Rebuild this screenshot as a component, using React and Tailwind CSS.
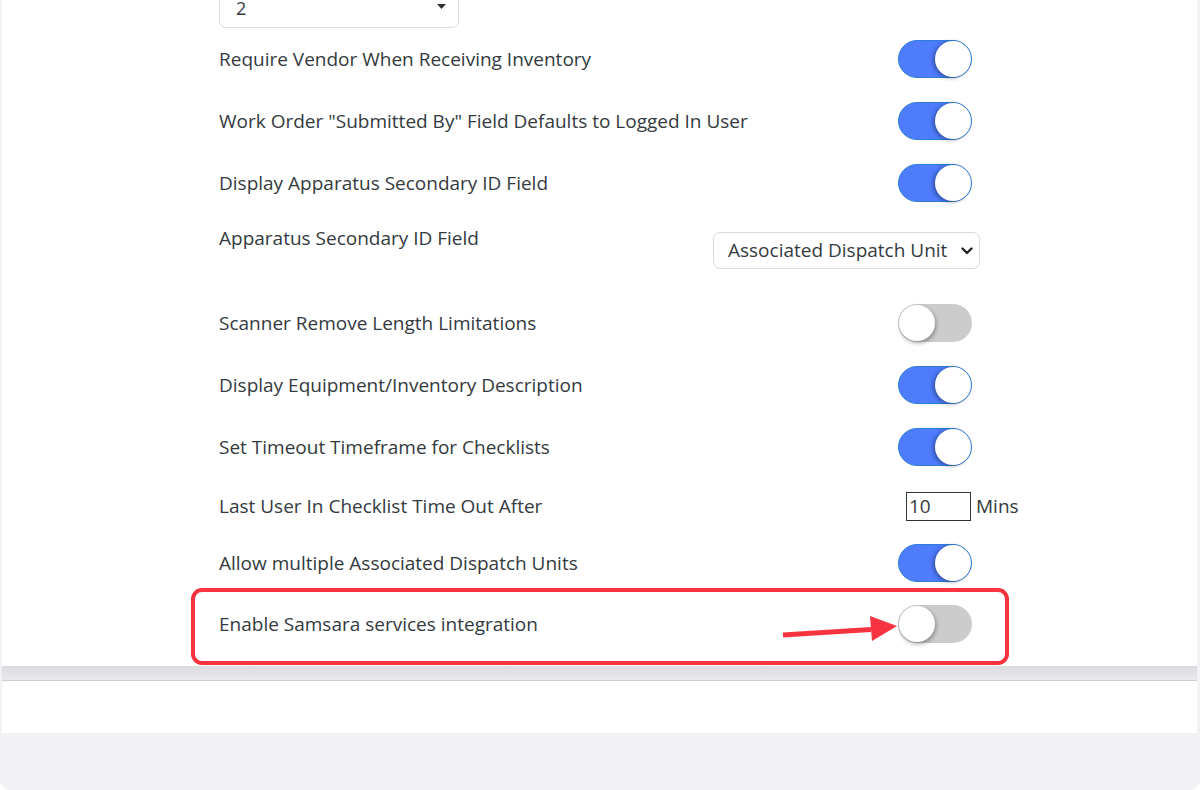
import React from "react";

const font = { fontFamily: '"Open Sans", "Noto Sans", sans-serif' };

function Toggle({ on }) {
  return on ? (
    <div className="relative h-[38px] w-[74px] rounded-full border border-[#2b7fd6] bg-[#4f7cfd]">
      <div className="absolute right-[0px] top-[0px] h-[36px] w-[36px] rounded-full bg-white shadow-[-2px_1px_4px_rgba(0,0,0,0.35)]" />
    </div>
  ) : (
    <div className="relative h-[38px] w-[74px] rounded-full bg-[#cccccc]">
      <div className="absolute left-[1px] top-[1px] h-[36px] w-[36px] rounded-full bg-white shadow-[1px_2px_4px_rgba(0,0,0,0.35)]" />
    </div>
  );
}

function ToggleRow({ label, on, h = "h-[62px]" }) {
  return (
    <div className={`flex ${h} items-center`}>
      <div className="w-[679px] text-[19px] text-[#343a40]">{label}</div>
      <Toggle on={on} />
    </div>
  );
}

export default function App() {
  return (
    <div style={font} className="h-[790px] w-[1200px] overflow-hidden rounded-b-[10px] bg-[#f2f2f4] pl-[2px] pr-[3px] pt-[2px]">
      <div className="rounded-t-[10px] bg-white">
        <div className="pl-[217px]">
          {/* top select */}
          <div className="relative -mt-[14px] flex h-[40px] w-[240px] items-center justify-between rounded-[7px] border border-[#dcdcdc] pl-[16px] pr-[12px] text-[18px] text-[#343a40]">
            <span className="leading-[22px]">2</span>
            <svg width="9" height="6" viewBox="0 0 9 6" className="mt-[-2px]">
              <path d="M0 0 L9 0 L4.5 5 Z" fill="#333" />
            </svg>
          </div>
          <ToggleRow label="Require Vendor When Receiving Inventory" on />
          <ToggleRow label='Work Order "Submitted By" Field Defaults to Logged In User' on />
          <ToggleRow label="Display Apparatus Secondary ID Field" on />
          <div className="flex h-[78px] items-start">
            <div className="w-[494px] pt-[10px] text-[19px] text-[#343a40]">Apparatus Secondary ID Field</div>
            <div className="mt-[18px] flex h-[37px] w-[267px] items-center justify-between rounded-[7px] border border-[#d9d9d9] pl-[14px] pr-[6px] text-[19px] text-[#343a40]">
              <span>Associated Dispatch Unit</span>
              <svg width="12" height="8" viewBox="0 0 12 8">
                <path d="M1.5 1.5 L6 6 L10.5 1.5" fill="none" stroke="#222" strokeWidth="2.4" strokeLinecap="round" strokeLinejoin="round" />
              </svg>
            </div>
          </div>
          <ToggleRow label="Scanner Remove Length Limitations" on={false} />
          <ToggleRow label="Display Equipment/Inventory Description" on />
          <ToggleRow label="Set Timeout Timeframe for Checklists" on />
          <div className="flex h-[56px] items-center">
            <div className="w-[687px] text-[19px] text-[#343a40]">Last User In Checklist Time Out After</div>
            <div className="flex h-[29px] w-[65px] items-center border border-[#333] pl-[2px] text-[19px] text-[#343a40]">10</div>
            <span className="ml-[5px] text-[19px] text-[#343a40]">Mins</span>
          </div>
          <ToggleRow label="Allow multiple Associated Dispatch Units" on h="h-[58px]" />
          <div className="relative">
            <ToggleRow label="Enable Samsara services integration" on={false} h="h-[64px]" />
            <div className="pointer-events-none absolute left-[-28px] top-[-4px] h-[77px] w-[818px] rounded-[11px] border-[4px] border-[#f7333f]" />
            <svg className="pointer-events-none absolute left-[560px] top-[10px]" width="120" height="40" viewBox="0 0 120 40">
              <path d="M4 33 L92 27.5" stroke="#f7333f" strokeWidth="5" strokeLinecap="butt" />
              <path d="M91 14 L118 24 L93 39 Z" fill="#f7333f" />
            </svg>
          </div>
        </div>
        <div className="h-[10px]" />
      </div>
      <div className="h-[15px] border-b border-[#cfcfd2] bg-gradient-to-b from-[#dcdce0] to-[#e9e9ec]" />
      <div className="h-[52px] bg-white" />
    </div>
  );
}
